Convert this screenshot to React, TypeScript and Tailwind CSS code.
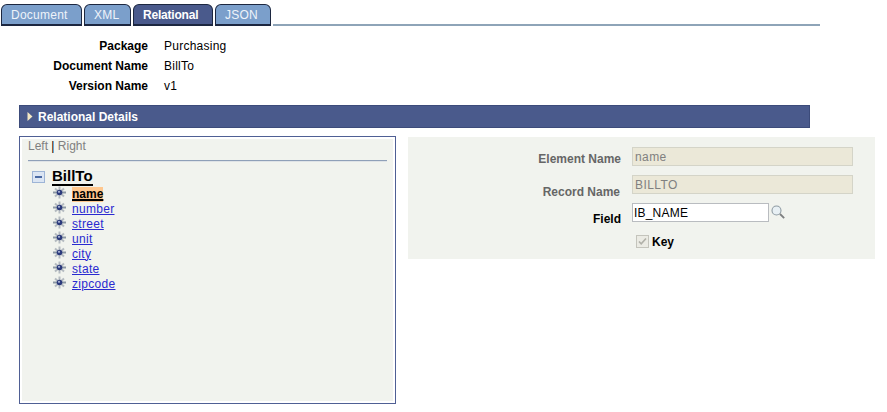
const tabs = [
  { label: 'Document', width: 'w-[81px]' },
  { label: 'XML', width: 'w-[47px]' },
  { label: 'Relational', width: 'w-[80px]', active: true },
  { label: 'JSON', width: 'w-[56px]' },
]

const summary = [
  ['Package', 'Purchasing'],
  ['Document Name', 'BillTo'],
  ['Version Name', 'v1'],
]

const nodes = ['number', 'street', 'unit', 'city', 'state', 'zipcode']

function NodeIcon() {
  return (
    <svg width="13" height="13" viewBox="0 0 13 13" className="mb-[3px] shrink-0">
      <path d="M6.5 0.5v12M2 2.5l9 8M11 2.5l-9 8" stroke="#b4bac0" strokeWidth="2" />
      <path d="M0 6.5h13" stroke="#8d98a5" strokeWidth="2" />
      <circle cx="6.5" cy="6.5" r="2.8" fill="#2c3a7c" />
      <circle cx="6" cy="5.8" r="1.1" fill="#a9b4d6" />
    </svg>
  )
}

function LookupIcon() {
  return (
    <svg width="14" height="14" viewBox="0 0 14 14" className="mb-[1px] ml-[2px] shrink-0">
      <circle cx="5.5" cy="5.5" r="4.5" fill="#e8f0f4" stroke="#8f9ba3" strokeWidth="1.1" />
      <path d="M9 9l4.2 4.2" stroke="#7d7f80" strokeWidth="1.8" />
    </svg>
  )
}

export default function App() {
  return (
    <div className="w-[887px] h-[412px] overflow-hidden bg-white text-[12px] leading-[14px] text-black font-['Liberation_Sans',Arial,sans-serif]">
      {/* Tabs */}
      <div className="flex h-[26px] items-end pl-px pt-1">
        {tabs.map((tab) => (
          <div
            key={tab.label}
            className={`mr-[2px] flex h-[22px] items-center rounded-t-[6px] border border-b-2 border-[#1c2740] pl-[9px] pt-px ${tab.width} ${
              tab.active
                ? 'bg-[#4a5a8c] font-bold tracking-[-0.2px] text-white'
                : 'bg-[#7b9fcb] tracking-[0.25px] text-[#eef3fa]'
            }`}
          >
            {tab.label}
          </div>
        ))}
        <div className="h-[2px] w-[547px] bg-[#8ea4b8]" />
      </div>

      {/* Summary */}
      <div className="mt-[13px] flex flex-col gap-[6px]">
        {summary.map(([label, value]) => (
          <div key={label} className="flex h-[14px] items-center">
            <div className="w-[148px] text-right font-bold">{label}</div>
            <div className="ml-4 tracking-[0.25px]">{value}</div>
          </div>
        ))}
      </div>

      {/* Section bar */}
      <div className="ml-[19px] mt-[12px] flex h-[23px] w-[791px] items-center border border-[#3c4b7a] bg-[#4a5a8c] pl-[7px] font-bold text-white">
        <svg width="6" height="9" viewBox="0 0 6 9" className="mr-[5px]">
          <path d="M0.5 0v9L5.5 4.5z" fill="#f3e7c4" />
        </svg>
        Relational Details
      </div>

      <div className="ml-[19px] mt-2 flex items-start gap-3">
        {/* Tree panel */}
        <div className="h-[268px] w-[377px] border border-[#4f5f94] bg-white p-[2px]">
          <div className="h-full bg-[#f1f3ee] px-[6px]">
            <div className="h-[14px] text-[#808080]">
              Left <span className="text-black">|</span> Right
            </div>
            <div className="mt-[7px] h-[2px] w-[359px] border-t border-b border-t-[#8fa0b8] border-b-[#dfe3e6]" />
            <div className="mt-[7px] flex h-[16px] items-center">
              <div className="ml-[4px] flex h-[12px] w-[13px] items-center justify-center border border-[#9db4d6] bg-[#dbe5f3]">
                <div className="h-[2px] w-[7px] bg-[#4a6aa4]" />
              </div>
              <div className="ml-[7px] border-b-2 border-black text-[15px] font-bold leading-[16px]">BillTo</div>
            </div>
            <div className="mt-[1px] flex h-[15px] items-center pl-[25px]">
              <NodeIcon />
              <span className="relative top-px ml-[6px] bg-[#ffc78e] font-bold leading-[15px] underline decoration-2">name</span>
            </div>
            {nodes.map((node) => (
              <div key={node} className="flex h-[15px] items-center pl-[25px]">
                <NodeIcon />
                <a href="#" className="ml-[6px] tracking-[0.3px] text-[#2a2ad0] underline">
                  {node}
                </a>
              </div>
            ))}
          </div>
        </div>

        {/* Detail panel */}
        <div className="mt-px flex h-[122px] w-[467px] flex-col bg-[#f1f3ee] pt-[10px]">
          <div className="flex h-[19px] items-center">
            <div className="w-[213px] pt-1 text-right font-bold text-[#666666]">Element Name</div>
            <div className="ml-[11px] flex h-[19px] w-[221px] items-center border border-[#d4d4c8] bg-[#ebe8d8] pl-[2px] tracking-[0.4px] text-[#808080]">
              name
            </div>
          </div>
          <div className="mt-[9px] flex h-[19px] items-center">
            <div className="relative top-[7px] w-[212px] text-right font-bold text-[#666666]">Record Name</div>
            <div className="ml-[12px] flex h-[19px] w-[221px] items-center border border-[#d4d4c8] bg-[#ebe8d8] pl-[2px] tracking-[0.4px] text-[#808080]">
              BILLTO
            </div>
          </div>
          <div className="mt-[9px] flex h-[19px] items-center">
            <div className="relative top-[6px] w-[213px] text-right font-bold">Field</div>
            <div className="ml-[11px] flex h-[19px] w-[137px] items-center border border-[#b9bcc0] bg-white pl-[1px] tracking-[0.2px]">
              IB_NAME
            </div>
            <LookupIcon />
          </div>
          <div className="ml-[228px] mt-[12px] flex h-[15px] items-center">
            <div className="flex h-[13px] w-[13px] items-center justify-center border border-[#c4c4bc] bg-[#ebebe4]">
              <svg width="9" height="9" viewBox="0 0 9 9">
                <path d="M1 4.5l2.2 2.4L8 1.5" fill="none" stroke="#b0b0a8" strokeWidth="1.6" />
              </svg>
            </div>
            <span className="ml-[3px] font-bold">Key</span>
          </div>
        </div>
      </div>
    </div>
  )
}
